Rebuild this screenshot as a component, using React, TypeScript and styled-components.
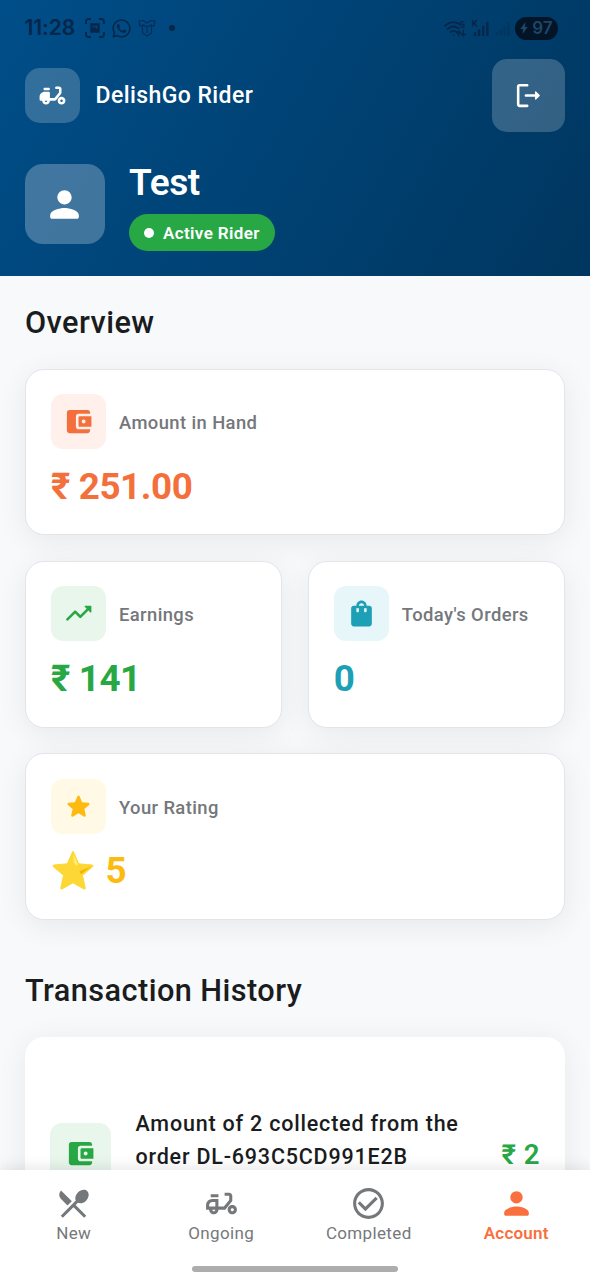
import React from "react";
import styled, { createGlobalStyle } from "styled-components";
import { MdOutlineDeliveryDining, MdRestaurantMenu, MdCheckCircleOutline } from "react-icons/md";
import { FaWhatsapp } from "react-icons/fa";

const GlobalStyle = createGlobalStyle`
  * { box-sizing: border-box; }
  body { margin: 0; background: #f8f9fa; font-family: Roboto, sans-serif; }
`;

const Screen = styled.div`
  width: 590px;
  height: 1280px;
  display: flex;
  flex-direction: column;
  overflow: hidden;
  background: #f8f9fb;
`;

const Header = styled.header`
  flex: none;
  height: 275.5px;
  padding: 0 25px 0 24.5px;
  background: linear-gradient(120deg, #004e89 0%, #00365f 100%);
  color: #fff;
`;

const StatusBar = styled.div`
  height: 58px;
  display: flex;
  align-items: center;
  justify-content: space-between;
  padding: 0 7px 2px 0;
  color: #06264a;
`;

const StatusGroup = styled.div<{ $gap: number }>`
  display: flex;
  align-items: center;
  gap: ${(p) => p.$gap}px;
`;

const Clock = styled.span`
  font: 600 21px/24px Inter, sans-serif;
  letter-spacing: -0.1px;
  margin-right: 4px;
`;

const NotificationDot = styled.i`
  width: 6px;
  height: 6px;
  margin-left: 7px;
  border-radius: 50%;
  background: currentColor;
`;

const Battery = styled.span`
  width: 43px;
  height: 23px;
  display: flex;
  align-items: center;
  justify-content: center;
  gap: 4px;
  border-radius: 12px;
  background: #021426;
  color: #1d4668;
  font: 600 17px/23px Inter, sans-serif;
`;

const AppBar = styled.div`
  height: 75px;
  display: flex;
  align-items: center;
`;

const GlassTile = styled.div<{ $size: number; $radius: number; $alpha: number }>`
  flex: none;
  width: ${(p) => p.$size}px;
  height: ${(p) => p.$size}px;
  border-radius: ${(p) => p.$radius}px;
  background: rgba(255, 255, 255, ${(p) => p.$alpha});
  display: flex;
  align-items: center;
  justify-content: center;
`;

const AppName = styled.h1`
  flex: 1;
  margin: 0 0 0 16px;
  font-size: 23px;
  line-height: 28px;
  font-weight: 500;
  letter-spacing: 0.42px;
`;

const Profile = styled.div`
  display: flex;
  align-items: flex-start;
  gap: 24.5px;
  padding-top: 31px;
`;

const RiderName = styled.h2`
  margin: -3px 0 10px;
  font-size: 37px;
  line-height: 43px;
  font-weight: 600;
  letter-spacing: -0.4px;
`;

const StatusChip = styled.span`
  height: 37px;
  width: 146px;
  display: flex;
  align-items: center;
  gap: 9px;
  padding-left: 15px;
  border-radius: 19px;
  background: #28a745;
  font-size: 17px;
  font-weight: 600;
  letter-spacing: 0.38px;
  white-space: nowrap;
`;

const ChipDot = styled.i`
  width: 10px;
  height: 10px;
  border-radius: 50%;
  background: #fff;
`;

const Content = styled.main`
  flex: 1;
  min-height: 0;
  overflow: hidden;
  padding: 0 25px;
`;

const SectionTitle = styled.h3<{ $top: number; $bottom: number }>`
  margin: 0;
  padding: ${(p) => p.$top}px 0 ${(p) => p.$bottom}px;
  font-size: 30.7px;
  line-height: 38px;
  font-weight: 500;
  letter-spacing: 0.44px;
  color: #1a1c1e;
`;

const StatGrid = styled.div`
  display: grid;
  grid-template-columns: 1fr 1fr;
  grid-auto-rows: 166.7px;
  gap: 25.7px;
`;

const StatCard = styled.article<{ $wide?: boolean }>`
  grid-column: ${(p) => (p.$wide ? "1 / -1" : "auto")};
  padding: 24.5px 25px;
  border: 1.5px solid #e3e5ea;
  border-radius: 19px;
  background: #fff;
  box-shadow: 0 6px 30px rgba(0, 0, 0, 0.07);
`;

const StatHead = styled.div`
  display: flex;
  align-items: center;
  gap: 13px;
`;

const TintTile = styled.div<{ $size: number; $bg: string; $fg: string }>`
  flex: none;
  width: ${(p) => p.$size}px;
  height: ${(p) => p.$size}px;
  border-radius: 12px;
  background: ${(p) => p.$bg};
  color: ${(p) => p.$fg};
  display: flex;
  align-items: center;
  justify-content: center;
`;

const StatLabel = styled.span`
  padding-top: 2.5px;
  font-size: 18.4px;
  line-height: 26px;
  font-weight: 500;
  letter-spacing: 0.4px;
  color: #74777b;
  white-space: nowrap;
`;

const StatValue = styled.div<{ $color: string }>`
  display: flex;
  align-items: center;
  gap: 11.5px;
  height: 44px;
  margin-top: 15.5px;
  font-size: 36.8px;
  line-height: 44px;
  font-weight: 700;
  letter-spacing: -0.4px;
  color: ${(p) => p.$color};
  svg { margin-top: -3px; }
`;

const TransactionCard = styled.article`
  height: 240px;
  padding: 70px 25px 0 24.5px;
  border-radius: 19px;
  background: #fff;
  box-shadow: 0 4px 30px rgba(0, 0, 0, 0.07);
  display: flex;
  align-items: flex-start;
`;

const TransactionIcon = styled(TintTile)`
  margin-top: 16px;
`;

const TransactionText = styled.p`
  flex: 1;
  margin: 0 0 0 25px;
  font-size: 21.5px;
  line-height: 33px;
  font-weight: 500;
  letter-spacing: 0.8px;
  color: #1a1c1e;
  white-space: nowrap;
`;

const TransactionAmount = styled.span`
  margin-top: 31px;
  font-size: 27.6px;
  line-height: 34px;
  font-weight: 600;
  letter-spacing: 0.5px;
  color: #28a745;
`;

const BottomNav = styled.nav`
  position: relative;
  flex: none;
  height: 110px;
  display: grid;
  grid-template-columns: repeat(4, 1fr);
  grid-template-rows: 93px 1fr;
  background: #fff;
  box-shadow: 0 -2px 14px rgba(0, 0, 0, 0.1);
`;

const NavItem = styled.a<{ $active?: boolean }>`
  display: flex;
  flex-direction: column;
  align-items: center;
  padding-top: 14.5px;
  font-size: 17px;
  line-height: 22px;
  letter-spacing: ${(p) => (p.$active ? 0.25 : 0.35)}px;
  font-weight: ${(p) => (p.$active ? 600 : 400)};
  color: ${(p) => (p.$active ? "#f96f3e" : "#75787b")};
  svg { display: block; }
`;

const HomeIndicator = styled.i`
  grid-column: 1 / -1;
  justify-self: center;
  width: 206px;
  height: 6px;
  margin-top: 3px;
  border-radius: 3px;
  background: #adadae;
`;

const Icon = ({ size, children }: { size: number; children: React.ReactNode }) => (
  <svg width={size} height={size} viewBox="0 0 24 24" fill="currentColor">{children}</svg>
);

const Wallet = () => (
  <Icon size={31}>
    <path d="M10 16V8c0-1.1.89-2 2-2h9V5c0-1.1-.9-2-2-2H5c-1.11 0-2 .9-2 2v14c0 1.1.89 2 2 2h14c1.1 0 2-.9 2-2v-1h-9c-1.11 0-2-.9-2-2zm3-8c-.55 0-1 .45-1 1v6c0 .55.45 1 1 1h9V8h-9zm3 5.5c-.83 0-1.5-.67-1.5-1.5s.67-1.5 1.5-1.5 1.5.67 1.5 1.5-.67 1.5-1.5 1.5z" />
  </Icon>
);

const Person = ({ size }: { size: number }) => (
  <Icon size={size}>
    <path d="M12 12c2.21 0 4-1.79 4-4s-1.79-4-4-4-4 1.79-4 4 1.79 4 4 4zm0 2c-2.67 0-8 1.34-8 4v1c0 .55.45 1 1 1h14c.55 0 1-.45 1-1v-1c0-2.66-5.33-4-8-4z" />
  </Icon>
);

const Scooter = () => (
  <Icon size={31}>
    <path d="M19 7c0-1.1-.9-2-2-2h-2c-.55 0-1 .45-1 1s.45 1 1 1h2v2.65L13.52 14H10v-4c0-.55-.45-1-1-1H6c-2.21 0-4 1.79-4 4v2c0 .55.45 1 1 1h1c0 1.66 1.34 3 3 3s3-1.34 3-3h3.52c.61 0 1.18-.28 1.56-.75l3.48-4.35c.28-.35.44-.8.44-1.25V7zM7 17c-.55 0-1-.45-1-1h2c0 .55-.45 1-1 1z" />
    <path d="M6 6h3c.55 0 1 .45 1 1s-.45 1-1 1H6c-.55 0-1-.45-1-1s.45-1 1-1z" />
    <path d="M19 13c-1.66 0-3 1.34-3 3s1.34 3 3 3 3-1.34 3-3-1.34-3-3-3zm0 4c-.55 0-1-.45-1-1s.45-1 1-1 1 .45 1 1-.45 1-1 1z" />
  </Icon>
);

const Logout = () => (
  <Icon size={31}>
    <path d="M5 5h6c.55 0 1-.45 1-1s-.45-1-1-1H5c-1.1 0-2 .9-2 2v14c0 1.1.9 2 2 2h6c.55 0 1-.45 1-1s-.45-1-1-1H5V5z" />
    <path d="M20.65 11.65l-2.79-2.79c-.32-.32-.86-.1-.86.35V11h-7c-.55 0-1 .45-1 1s.45 1 1 1h7v1.79c0 .45.54.67.85.35l2.79-2.79c.2-.19.2-.51.01-.7z" />
  </Icon>
);

const TrendUp = () => (
  <Icon size={31}>
    <path d="M16.85 6.85l1.44 1.44-4.88 4.88-3.29-3.29c-.39-.39-1.02-.39-1.41 0l-6 6.01c-.39.39-.39 1.02 0 1.41.39.39 1.02.39 1.41 0L9.41 12l3.29 3.29c.39.39 1.02.39 1.41 0l5.59-5.58 1.44 1.44c.31.31.85.09.85-.35V6.5c.01-.28-.21-.5-.49-.5h-4.29c-.45 0-.67.54-.36.85z" />
  </Icon>
);

const Bag = () => (
  <Icon size={31}>
    <path d="M18 6h-2c0-2.21-1.79-4-4-4S8 3.790 8 6H6c-1.1 0-2 .9-2 2v12c0 1.1.9 2 2 2h12c1.1 0 2-.9 2-2V8c0-1.1-.9-2-2-2zm-8 4c0 .55-.45 1-1 1s-1-.45-1-1V8h2v2zm2-6c1.1 0 2 .9 2 2h-4c0-1.1.9-2 2-2zm4 6c0 .55-.45 1-1 1s-1-.45-1-1V8h2v2z" />
  </Icon>
);

const Star = () => (
  <Icon size={31}>
    <path d="M12 17.27l4.15 2.51c.76.46 1.69-.22 1.49-1.08l-1.1-4.72 3.67-3.18c.67-.58.31-1.68-.57-1.75l-4.83-.41-1.89-4.46c-.34-.81-1.5-.81-1.84 0L9.19 8.63l-4.83.41c-.88.07-1.24 1.17-.57 1.75l3.67 3.18-1.1 4.72c-.2.86.73 1.54 1.49 1.08l4.15-2.5z" />
  </Icon>
);

const GlossyStar = () => (
  <svg width="43" height="42" viewBox="0 0 43 42">
    <path
      d="M22.300 2.500l5.400 12.300 13.300 1.200c1.100.1 1.400 1 .6 1.700L31.500 26.300l2.700 12.600c.2 1-.6 1.500-1.400 1L22 33.800 11.200 39.900c-.8.5-1.600 0-1.400-1l2.700-12.600L2.400 17.700c-.8-.7-.5-1.600.6-1.700l13.300-1.200 5.400-12.300z"
      fill="#fdd835"
      stroke="#fdd835"
      strokeLinejoin="round"
    />
    <path d="M22.500 5.500l4.300 10-1.200 1.500L22.800 13z" fill="#fff176" />
    <path d="M40.500 17.200L30 25.300l-1.500-3z" fill="#f4b400" />
  </svg>
);

const Screenshot = () => (
  <svg width="20" height="20" viewBox="0 0 20 20" fill="none" stroke="currentColor" strokeWidth="1.8">
    <path d="M1 6V3.500A2.500 2.500 0 0 1 3.500 1H6M14 1h2.500A2.500 2.500 0 0 1 19 3.500V6M19 14v2.500a2.500 2.500 0 0 1-2.500 2.500H14M6 19H3.500A2.500 2.500 0 0 1 1 16.500V14" />
    <path d="M6.500 6.500h7v7h-7zM6.500 13l3-3 2 2 1-1" strokeWidth="2.4" />
  </svg>
);

const Shirt = () => (
  <svg width="18" height="18" viewBox="0 0 18 18" fill="none" stroke="currentColor" strokeWidth="1.2" opacity=".75">
    <path d="M1 2l4-.5L9 4l4-2.500 4 .5-1 5-2.500-.5V14L9 17l-4.500-3V6.500L2 7zM4.500 5.500L9 8l4.500-2.500M9 8v6" />
  </svg>
);

const Wifi = () => (
  <svg width="23" height="17" viewBox="0 0 25 18" fill="none" stroke="currentColor" strokeWidth="1.9" strokeLinecap="round">
    <path d="M1 6c6-5 12-5 17-1M4 9.500c4-3.500 8-3.500 12-.5M7 13c2.500-2 4.500-2 7 0" />
    <path d="M10.500 16h.1M21.500 1.500h-3v3h3v3h-3" strokeWidth="1.5" />
    <path d="M16 17v-5M14 14l2-2 2 2M21 11v6M19 15l2 2 2-2" strokeWidth="1.5" />
  </svg>
);

const Signal = ({ dim }: { dim?: boolean }) => (
  <svg width={dim ? 16 : 17} height="17" viewBox="0 0 18 18" fill="currentColor">
    {!dim && <path d="M0 0h1.500v3L4 0h2L3.500 3.500 6 7H4L1.500 4v3H0z" />}
    <g opacity={dim ? 0.35 : 1}>
      <rect x="2" y="13" width="2.5" height="4" />
      <rect x="6.3" y="10" width="2.5" height="7" />
      <rect x="10.6" y="6" width="2.5" height="11" />
      <rect x="15" y="2" width="2.5" height="15" />
    </g>
  </svg>
);

const Bolt = () => (
  <svg width="8" height="12" viewBox="0 0 8 13" fill="currentColor">
    <path d="M5.500 0L0 7.500h3L2.500 13 8 5.500H5z" />
  </svg>
);

type StatProps = {
  label: string;
  value: string;
  color: string;
  tint: string;
  icon: React.ReactNode;
  prefix?: React.ReactNode;
  wide?: boolean;
};

const Stat = ({ label, value, color, tint, icon, prefix, wide }: StatProps) => (
  <StatCard $wide={wide}>
    <StatHead>
      <TintTile $size={55} $bg={tint} $fg={color}>{icon}</TintTile>
      <StatLabel>{label}</StatLabel>
    </StatHead>
    <StatValue $color={color}>{prefix}<span>{value}</span></StatValue>
  </StatCard>
);

export default function App() {
  return (
    <>
      <GlobalStyle />
      <Screen>
        <Header>
          <StatusBar>
            <StatusGroup $gap={6}>
              <Clock>11:28</Clock>
              <Screenshot />
              <FaWhatsapp size={21} />
              <Shirt />
              <NotificationDot />
            </StatusGroup>
            <StatusGroup $gap={5}>
              <Wifi />
              <Signal />
              <Signal dim />
              <Battery><Bolt />97</Battery>
            </StatusGroup>
          </StatusBar>
          <AppBar>
            <GlassTile $size={55} $radius={15} $alpha={0.2}><Scooter /></GlassTile>
            <AppName>DelishGo Rider</AppName>
            <GlassTile $size={73.5} $radius={15} $alpha={0.2}><Logout /></GlassTile>
          </AppBar>
          <Profile>
            <GlassTile $size={80} $radius={18} $alpha={0.25}><Person size={43} /></GlassTile>
            <div>
              <RiderName>Test</RiderName>
              <StatusChip><ChipDot />Active Rider</StatusChip>
            </div>
          </Profile>
        </Header>
        <Content>
          <SectionTitle $top={28} $bottom={27}>Overview</SectionTitle>
          <StatGrid>
            <Stat wide label="Amount in Hand" value="₹ 251.00" color="#f3703d" tint="#fff0eb" icon={<Wallet />} />
            <Stat label="Earnings" value="₹ 141" color="#28a745" tint="#e9f6ec" icon={<TrendUp />} />
            <Stat label="Today's Orders" value="0" color="#1d9fb5" tint="#e7f6f8" icon={<Bag />} />
            <Stat wide label="Your Rating" value="5" color="#fdbb12" tint="#fff9e6" icon={<Star />} prefix={<GlossyStar />} />
          </StatGrid>
          <SectionTitle $top={52.5} $bottom={26.5}>Transaction History</SectionTitle>
          <TransactionCard>
            <TransactionIcon $size={61} $bg="#e9f6ec" $fg="#28a745"><Wallet /></TransactionIcon>
            <TransactionText>Amount of 2 collected from the<br />order DL-693C5CD991E2B</TransactionText>
            <TransactionAmount>₹ 2</TransactionAmount>
          </TransactionCard>
        </Content>
        <BottomNav>
          <NavItem><MdRestaurantMenu size={37} />New</NavItem>
          <NavItem><MdOutlineDeliveryDining size={37} />Ongoing</NavItem>
          <NavItem><MdCheckCircleOutline size={37} />Completed</NavItem>
          <NavItem $active><Person size={37} />Account</NavItem>
          <HomeIndicator />
        </BottomNav>
      </Screen>
    </>
  );
}
